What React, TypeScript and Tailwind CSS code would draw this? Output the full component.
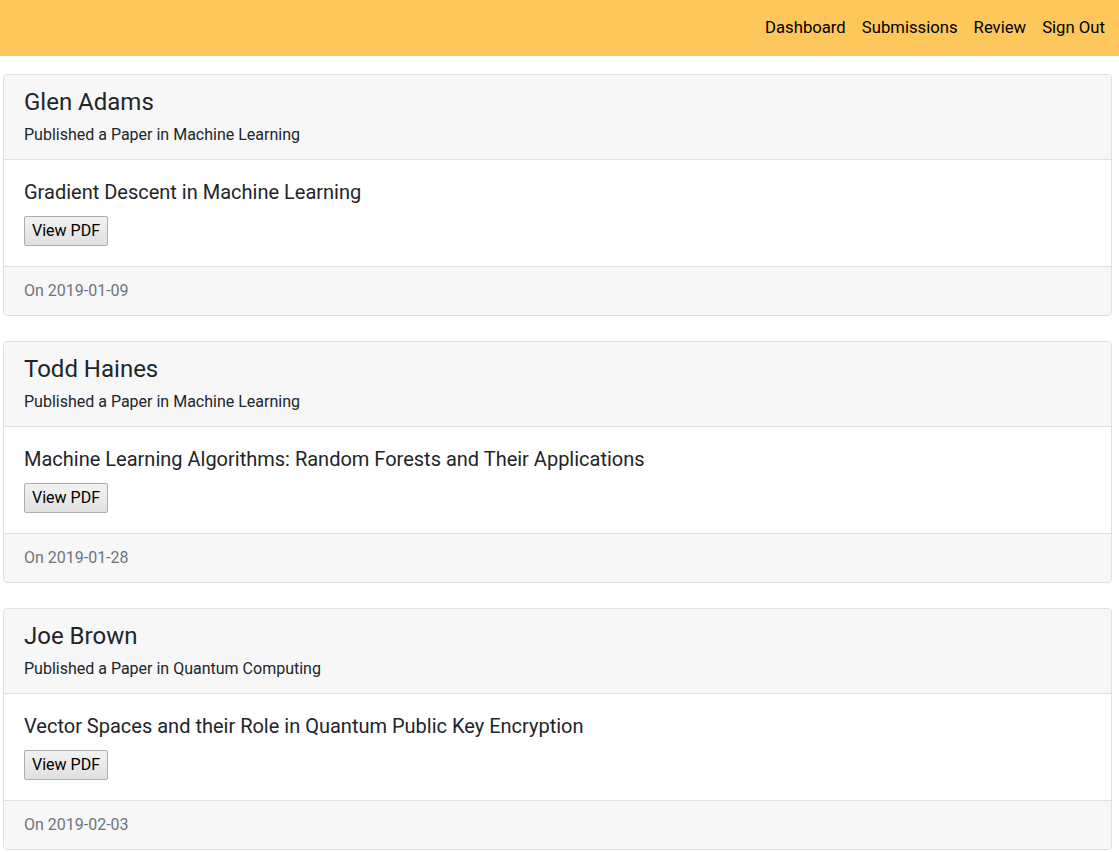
const papers = [
  {
    author: 'Glen Adams',
    field: 'Machine Learning',
    title: 'Gradient Descent in Machine Learning',
    date: '2019-01-09',
  },
  {
    author: 'Todd Haines',
    field: 'Machine Learning',
    title: 'Machine Learning Algorithms: Random Forests and Their Applications',
    date: '2019-01-28',
  },
  {
    author: 'Joe Brown',
    field: 'Quantum Computing',
    title: 'Vector Spaces and their Role in Quantum Public Key Encryption',
    date: '2019-02-03',
  },
];

export default function App() {
  return (
    <div className="min-h-screen bg-white font-['Roboto',sans-serif] text-[#212529]">
      <nav className="h-14 bg-[#fec75b] flex items-center justify-end pr-[6px]">
        {['Dashboard', 'Submissions', 'Review', 'Sign Out'].map((item) => (
          <a key={item} href="#" className="px-2 text-[16.7px] leading-6 text-black">
            {item}
          </a>
        ))}
      </nav>

      <div className="pt-[18px] pl-[3px] pr-[7px] flex flex-col gap-[25px]">
        {papers.map((paper) => (
          <div key={paper.author} className="border border-[#dfdfdf] rounded bg-white overflow-hidden">
            <div className="bg-[#f7f7f7] border-b border-[#dfdfdf] px-5 pt-[13px] pb-3">
              <h4 className="text-2xl leading-[29px] mb-[6px]">{paper.author}</h4>
              <p className="text-base leading-6">Published a Paper in {paper.field}</p>
            </div>
            <div className="p-5">
              <h5 className="text-xl leading-6 mb-3">{paper.title}</h5>
              <button className="h-[30px] px-[7px] text-base text-black border border-[#adadad] rounded-[2px] bg-gradient-to-b from-[#f2f2f2] to-[#e0e0e0]">
                View PDF
              </button>
            </div>
            <div className="bg-[#f7f7f7] border-t border-[#dfdfdf] px-5 py-3 text-base leading-6 text-[#6c757d]">
              On {paper.date}
            </div>
          </div>
        ))}
      </div>
    </div>
  );
}
